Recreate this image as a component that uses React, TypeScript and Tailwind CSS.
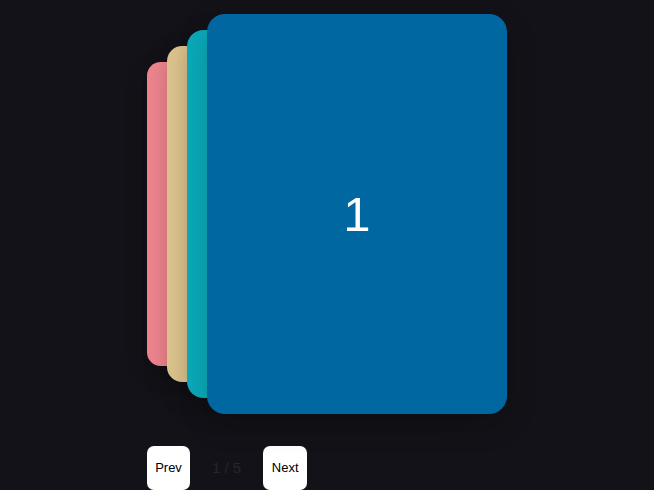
const cards = [
  { n: 1, color: 'bg-[#0067a1]' },
  { n: 2, color: 'bg-[#0aabbb]' },
  { n: 3, color: 'bg-[#dec58f]' },
  { n: 4, color: 'bg-[#f0868e]' },
  { n: 5, color: 'bg-[#7a5fa8]' },
];

// position of each card behind the front one
const stackStyle = [
  'z-40 translate-x-0 scale-100',
  'z-30 -translate-x-[32px] scale-[0.92]',
  'z-20 -translate-x-[64px] scale-[0.84]',
  'z-10 -translate-x-[96px] scale-[0.76]',
  'z-0 -translate-x-[96px] scale-[0.76] opacity-0',
];

export default function App() {
  return (
    <div className="min-h-[490px] w-full bg-[#131218] flex flex-col items-center pt-[14px] overflow-hidden" style={{ fontFamily: '"Liberation Sans", Arial, sans-serif' }}>
      <div className="w-[360px]">
        <div className="relative h-[400px] w-[300px] ml-[60px]">
          {cards.map((c, i) => (
            <div
              key={c.n}
              className={`absolute inset-0 rounded-[18px] ${c.color} ${stackStyle[i]} shadow-[0_10px_30px_rgba(0,0,0,0.2)] flex items-center justify-center`}
            >
              {i === 0 && <span className="text-[49px] leading-none text-white">{c.n}</span>}
            </div>
          ))}
        </div>
        <div className="mt-[32px] flex items-center gap-[22px]">
          <button className="h-[44px] w-[43px] rounded-[7px] bg-white text-[13px] text-black">Prev</button>
          <span className="text-[15px] text-[#26252b]">1 / 5</span>
          <button className="h-[44px] w-[44px] rounded-[7px] bg-white text-[13px] text-black">Next</button>
        </div>
      </div>
    </div>
  );
}
